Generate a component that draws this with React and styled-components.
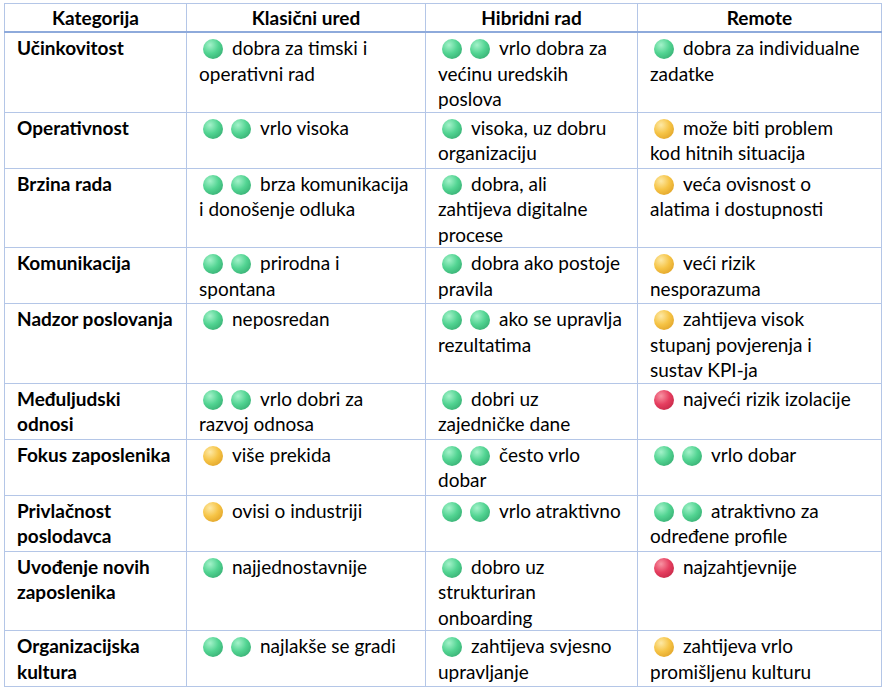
import React from 'react';
import styled, { createGlobalStyle } from 'styled-components';

const GlobalStyle = createGlobalStyle`
  html, body {
    margin: 0;
    padding: 0;
    background: #ffffff;
  }
  body {
    font-family: Lato, "Liberation Sans", sans-serif;
    color: #000000;
  }
`;

const Page = styled.div`
  padding: 3px 0 0 4px;
`;

const Table = styled.table`
  border-collapse: collapse;
  table-layout: fixed;
  width: 877px;
  font-size: 19px;
  line-height: 25.5px;
`;

const HeadCell = styled.th`
  height: 27px;
  padding: 0 12px;
  font-weight: 700;
  text-align: center;
  vertical-align: middle;
  line-height: 24px;
  border: 1px solid #b4c6e7;
  border-bottom: 2px solid #8eaadb;
`;

const Row = styled.tr`
  height: 56px;
`;

const Cell = styled.td`
  padding: 2px 12px 0 12px;
  vertical-align: top;
  border: 1px solid #b4c6e7;
  font-weight: ${({ $bold }) => ($bold ? 700 : 400)};
`;

const Line = styled.span`
  display: block;
  white-space: nowrap;
`;

const tones = {
  g: { light: '#a4f2ca', mid: '#52d492', dark: '#2c9f66' },
  y: { light: '#fde9a6', mid: '#f6c446', dark: '#d8961c' },
  r: { light: '#f894a3', mid: '#e63f60', dark: '#b71d3c' },
};

const Ball = styled.span`
  display: inline-block;
  width: 20px;
  height: 20px;
  border-radius: 50%;
  margin: 0 8px 0 4px;
  vertical-align: -4px;
  background: ${({ $tone }) =>
    `radial-gradient(circle at 35% 30%, ${tones[$tone].light} 0%, ${tones[$tone].mid} 45%, ${tones[$tone].dark} 100%)`};

  & + & {
    margin-left: 0;
  }
`;

const Gap = styled.span`
  display: inline-block;
  width: 1px;
`;

const columns = [
  { title: 'Kategorija', width: 182 },
  { title: 'Klasični ured', width: 239 },
  { title: 'Hibridni rad', width: 212 },
  { title: 'Remote', width: 244 },
];

const rows = [
  {
    name: ['Učinkovitost'],
    cells: [
      ['g', ['dobra za timski i', 'operativni rad']],
      ['gg', ['vrlo dobra za', 'većinu uredskih', 'poslova']],
      ['g', ['dobra za individualne', 'zadatke']],
    ],
  },
  {
    name: ['Operativnost'],
    cells: [
      ['gg', ['vrlo visoka']],
      ['g', ['visoka, uz dobru', 'organizaciju']],
      ['y', ['može biti problem', 'kod hitnih situacija']],
    ],
  },
  {
    name: ['Brzina rada'],
    cells: [
      ['gg', ['brza komunikacija', 'i donošenje odluka']],
      ['g', ['dobra, ali', 'zahtijeva digitalne', 'procese']],
      ['y', ['veća ovisnost o', 'alatima i dostupnosti']],
    ],
  },
  {
    name: ['Komunikacija'],
    cells: [
      ['gg', ['prirodna i', 'spontana']],
      ['g', ['dobra ako postoje', 'pravila']],
      ['y', ['veći rizik', 'nesporazuma']],
    ],
  },
  {
    name: ['Nadzor poslovanja'],
    cells: [
      ['g', ['neposredan']],
      ['gg', ['ako se upravlja', 'rezultatima']],
      ['y', ['zahtijeva visok', 'stupanj povjerenja i', 'sustav KPI-ja']],
    ],
  },
  {
    name: ['Međuljudski', 'odnosi'],
    cells: [
      ['gg', ['vrlo dobri za', 'razvoj odnosa']],
      ['g', ['dobri uz', 'zajedničke dane']],
      ['r', ['najveći rizik izolacije']],
    ],
  },
  {
    name: ['Fokus zaposlenika'],
    cells: [
      ['y', ['više prekida']],
      ['gg', ['često vrlo', 'dobar']],
      ['gg', ['vrlo dobar']],
    ],
  },
  {
    name: ['Privlačnost', 'poslodavca'],
    cells: [
      ['y', ['ovisi o industriji']],
      ['gg', ['vrlo atraktivno']],
      ['gg', ['atraktivno za', 'određene profile']],
    ],
  },
  {
    name: ['Uvođenje novih', 'zaposlenika'],
    cells: [
      ['g', ['najjednostavnije']],
      ['g', ['dobro uz', 'strukturiran', 'onboarding']],
      ['r', ['najzahtjevnije']],
    ],
  },
  {
    name: ['Organizacijska', 'kultura'],
    cells: [
      ['gg', ['najlakše se gradi']],
      ['g', ['zahtijeva svjesno', 'upravljanje']],
      ['y', ['zahtijeva vrlo', 'promišljenu kulturu']],
    ],
  },
];

const Rating = ({ marks, lines }) => (
  <>
    {lines.map((text, i) => (
      <Line key={i}>
        {i === 0 && (
          <>
            {marks.split('').map((tone, j) => (
              <Ball key={j} $tone={tone} />
            ))}
            <Gap />
          </>
        )}
        {text}
      </Line>
    ))}
  </>
);

export default function App() {
  return (
    <>
      <GlobalStyle />
      <Page>
        <Table>
          <colgroup>
            {columns.map((c) => (
              <col key={c.title} style={{ width: c.width }} />
            ))}
          </colgroup>
          <thead>
            <tr>
              {columns.map((c) => (
                <HeadCell key={c.title}>{c.title}</HeadCell>
              ))}
            </tr>
          </thead>
          <tbody>
            {rows.map((row) => (
              <Row key={row.name.join(' ')}>
                <Cell $bold>
                  {row.name.map((n) => (
                    <Line key={n}>{n}</Line>
                  ))}
                </Cell>
                {row.cells.map(([marks, lines], k) => (
                  <Cell key={k}>
                    <Rating marks={marks} lines={lines} />
                  </Cell>
                ))}
              </Row>
            ))}
          </tbody>
        </Table>
      </Page>
    </>
  );
}
